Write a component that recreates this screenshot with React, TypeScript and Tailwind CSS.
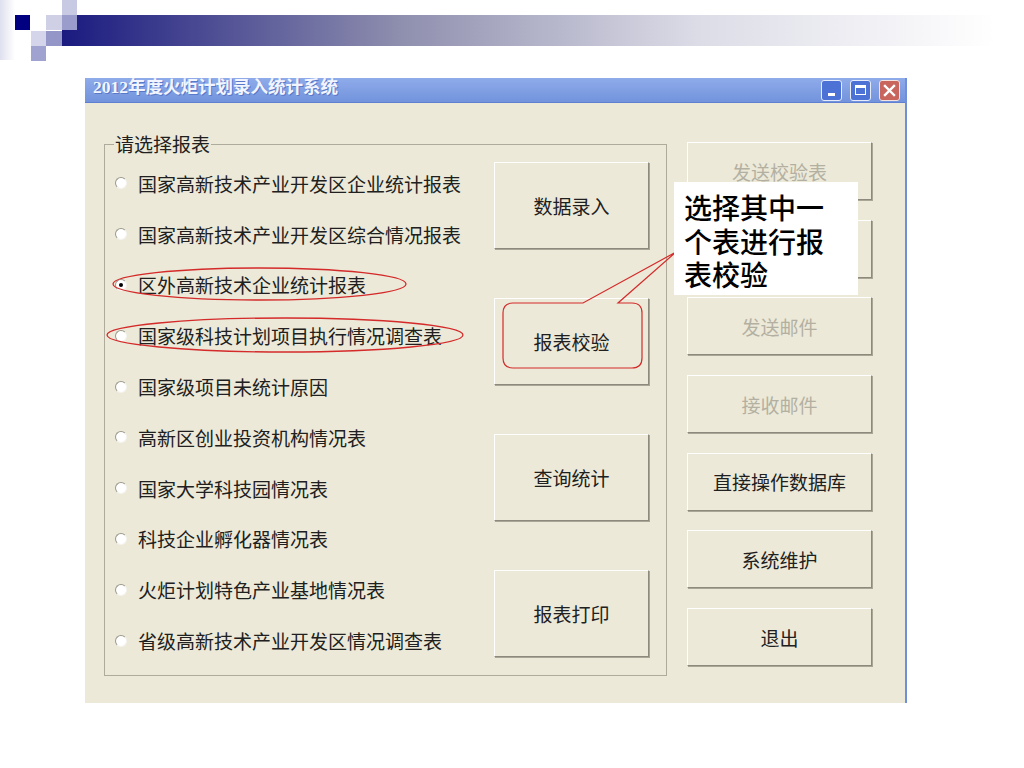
const FONT = { fontFamily: '"Noto Sans CJK SC", "Liberation Sans", sans-serif' };

const reports = [
  "国家高新技术产业开发区企业统计报表",
  "国家高新技术产业开发区综合情况报表",
  "区外高新技术企业统计报表",
  "国家级科技计划项目执行情况调查表",
  "国家级项目未统计原因",
  "高新区创业投资机构情况表",
  "国家大学科技园情况表",
  "科技企业孵化器情况表",
  "火炬计划特色产业基地情况表",
  "省级高新技术产业开发区情况调查表",
];

// second button is hidden under the callout in the slide
const sideButtons = [
  { id: "a", label: "发送校验表", disabled: true },
  { id: "b", label: "", disabled: true },
  { id: "c", label: "发送邮件", disabled: true },
  { id: "d", label: "接收邮件", disabled: true },
  { id: "e", label: "直接操作数据库" },
  { id: "f", label: "系统维护" },
  { id: "g", label: "退出" },
];

function WinButton({ label, disabled, className }: { label: string; disabled?: boolean; className: string }) {
  return (
    <div
      className={`flex items-center justify-center bg-[#ece9d8] border border-t-white border-l-white border-r-[#8d8a7d] border-b-[#8d8a7d] shadow-[1px_1px_0_#a9a695] text-[19px] leading-none ${
        disabled ? "text-[#b3b0a2]" : "text-[#202020]"
      } ${className}`}
    >
      {label}
    </div>
  );
}

function Header() {
  return (
    <svg width="1024" height="62" className="block">
      <defs>
        <linearGradient id="bar" x1="0" x2="1" y1="0" y2="0">
          <stop offset="0" stopColor="#1a1a80" />
          <stop offset="0.35" stopColor="#8e8eae" />
          <stop offset="0.66" stopColor="#dcdce7" />
          <stop offset="0.97" stopColor="#ffffff" />
        </linearGradient>
        <linearGradient id="edge" x1="0" x2="1" y1="0" y2="0">
          <stop offset="0" stopColor="#dfe0ef" />
          <stop offset="1" stopColor="#ffffff" />
        </linearGradient>
      </defs>
      <rect x="0" y="0" width="15" height="60" fill="url(#edge)" />
      <rect x="62" y="15" width="962" height="31" fill="url(#bar)" />
      <rect x="62" y="0" width="15" height="15" fill="#c8cae4" />
      <rect x="15" y="15" width="15" height="15" fill="#000080" />
      <rect x="46" y="15" width="16" height="15" fill="#cfd0e6" />
      <rect x="62" y="15" width="15" height="15" fill="#9a9dcc" />
      <rect x="31" y="31" width="15" height="15" fill="#d4d5ea" />
      <rect x="46" y="31" width="16" height="15" fill="#9396c6" />
      <rect x="31" y="46" width="15" height="15" fill="#a0a2cf" />
    </svg>
  );
}

function TitleBar() {
  return (
    <div className="h-[25px] flex items-center justify-between bg-gradient-to-b from-[#8fabea] to-[#7293dc] border-b border-b-[#5f80d2] pl-[8px] pr-[5px]">
      <span
        className="text-[17.5px] font-bold text-[#f2f5ff] leading-none -mt-[4px] [text-shadow:1px_1px_0_#5a78c8]"
        style={{ fontFamily: '"Liberation Serif", "Noto Sans CJK SC", serif' }}
      >
        2012年度火炬计划录入统计系统
      </span>
      <div className="flex gap-[8px] items-center">
        <div className="w-[21px] h-[21px] rounded-[3px] bg-[#4d72d6] border border-[#e6ecfa] flex items-end justify-center pb-[4px]">
          <div className="w-[7px] h-[3px] bg-white" />
        </div>
        <div className="w-[21px] h-[21px] rounded-[3px] bg-[#4d72d6] border border-[#e6ecfa] flex items-center justify-center">
          <div className="w-[11px] h-[10px] border border-white border-t-[3px]" />
        </div>
        <div className="w-[21px] h-[21px] rounded-[3px] bg-[#c8655c] border border-[#f3e2de] flex items-center justify-center">
          <svg width="13" height="13" viewBox="0 0 13 13">
            <path d="M2 2 L11 11 M11 2 L2 11" stroke="#fff" strokeWidth="2.4" strokeLinecap="square" />
          </svg>
        </div>
      </div>
    </div>
  );
}

export default function App() {
  return (
    <div className="relative w-[1024px] h-[768px] bg-white overflow-hidden" style={FONT}>
      <Header />
      <div className="mt-[16px] ml-[85px] w-[822px] border-r-2 border-r-[#6f8fd9]">
        <TitleBar />
        <div className="h-[600px] bg-[#ece9d8] flex items-start pl-[19px]">
          <fieldset className="mt-[30px] w-[563px] h-[543px] border border-[#aeab9c] min-w-0">
            <legend className="ml-[9px] px-[1px] text-[19px] leading-[22px] text-[#202020]">请选择报表</legend>
            <div className="flex">
              <div className="w-[389px] pt-[3px]">
                {reports.map((r, i) => (
                  <div key={r} className="h-[50.8px] flex items-center pl-[10px] gap-[11px]">
                    <span className="w-[12px] h-[12px] rounded-full bg-white border border-[#9a988c] border-r-[#f4f3ee] border-b-[#f4f3ee] flex items-center justify-center">
                      {i === 2 && <span className="w-[4px] h-[4px] rounded-full bg-black" />}
                    </span>
                    <span className="text-[19px] leading-none text-[#202020] whitespace-nowrap">{r}</span>
                  </div>
                ))}
              </div>
              <div className="mt-[7px] flex flex-col gap-[49px]">
                {["数据录入", "报表校验", "查询统计", "报表打印"].map((b) => (
                  <WinButton key={b} label={b} className="w-[155px] h-[87px]" />
                ))}
              </div>
            </div>
          </fieldset>
          <div className="mt-[39px] ml-[20px] flex flex-col gap-[19.7px]">
            {sideButtons.map((b) => (
              <WinButton key={b.id} label={b.label} disabled={b.disabled} className="w-[185px] h-[58px]" />
            ))}
          </div>
        </div>
      </div>

      <svg className="absolute left-0 top-0 pointer-events-none" width="1024" height="768">
        <ellipse cx="259.5" cy="284" rx="146.5" ry="16" fill="none" stroke="#d42a2a" strokeWidth="1.3" />
        <ellipse cx="285" cy="335" rx="178" ry="17" fill="none" stroke="#d42a2a" strokeWidth="1.3" />
        <path
          d="M513 303 L583 303 L676 252 L618 303 L632 303 Q642 303 642 313 L642 358 Q642 368 632 368 L513 368 Q503 368 503 358 L503 313 Q503 303 513 303 Z"
          fill="none"
          stroke="#d42a2a"
          strokeWidth="1.2"
        />
      </svg>

      <div className="absolute left-[674px] top-[182px] w-[184px] h-[113px] bg-white pl-[10px] pt-[9px] text-[28px] font-medium leading-[33.5px] text-black">
        <div>选择其中一</div>
        <div>个表进行报</div>
        <div>表校验</div>
      </div>
    </div>
  );
}
